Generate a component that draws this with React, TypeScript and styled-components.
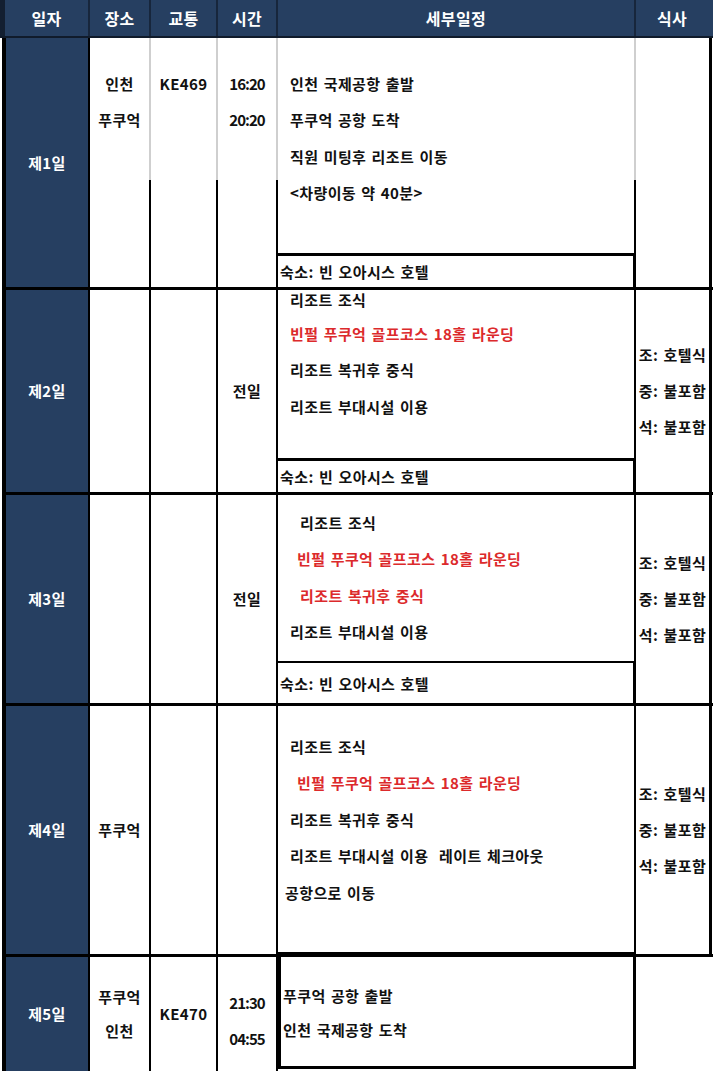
import React from "react";
import styled, { createGlobalStyle, css } from "styled-components";

const NAVY = "#263f61";
const RED = "#dc2a2c";

const GlobalStyle = createGlobalStyle`
  html, body {
    margin: 0;
    padding: 0;
    background: #fff;
  }
`;

const Sheet = styled.div`
  width: 713px;
  background: #fff;
  font-family: "Noto Sans CJK KR", "Noto Sans", sans-serif;
  font-weight: 700;
  font-size: 15px;
  letter-spacing: 0.4px;
  word-spacing: 1.5px;
  color: #111;
`;

const HeaderRow = styled.div`
  display: grid;
  grid-template-columns: 90px 61px 67px 60px 358px 72px;
  height: 38px;
  box-sizing: border-box;
  border-bottom: 2px solid #101b2b;
  background: ${NAVY};
`;

const HeadCell = styled.div<{ $first?: boolean; $last?: boolean }>`
  display: flex;
  align-items: center;
  justify-content: center;
  box-sizing: border-box;
  color: #fff;
  font-size: 16px;
  border-right: ${({ $last }) => ($last ? "none" : "2px solid #17263c")};
  border-left: ${({ $first }) => ($first ? "5px solid #131f31" : "none")};
`;

const DayRow = styled.div<{ $h: number; $open?: boolean }>`
  display: grid;
  grid-template-columns: 88px 61px 67px 60px 358px 76px;
  margin-left: 2px;
  height: ${({ $h }) => $h}px;
  box-sizing: border-box;
  border-bottom: ${({ $open }) => ($open ? "none" : "3px solid #000")};
`;

// the upper part of the first day's column lines is faint in the scan
const fadeTop = css`
  border-image: linear-gradient(to bottom, #cfcfcf 0 142px, #000 142px) 1;
`;

const Cell = styled.div<{
  $top?: number;
  $lh?: number;
  $center?: boolean;
  $fade?: boolean;
  $edge?: number;
  $tight?: boolean;
}>`
  display: flex;
  flex-direction: column;
  align-items: center;
  justify-content: ${({ $center }) => ($center ? "center" : "flex-start")};
  box-sizing: border-box;
  padding-top: ${({ $top }) => $top ?? 0}px;
  line-height: ${({ $lh }) => $lh ?? 36}px;
  border-right: ${({ $edge }) => $edge ?? 2}px solid #000;
  white-space: nowrap;
  letter-spacing: ${({ $tight }) => ($tight ? "-1px" : "inherit")};
  ${({ $fade }) => $fade && fadeTop}
`;

const DayCell = styled(Cell)`
  justify-content: center;
  background: ${NAVY};
  color: #fff;
  border-left: 4px solid #000;
`;

const Detail = styled.div<{ $fade?: boolean; $boxed?: boolean; $under?: number }>`
  display: flex;
  flex-direction: column;
  box-sizing: border-box;
  border-right: 2px solid #000;
  border-bottom: ${({ $under }) => ($under ? `${$under}px solid #000` : "none")};
  ${({ $fade }) => $fade && fadeTop}
  ${({ $boxed }) =>
    $boxed &&
    css`
      border: 3px solid #000;
      border-top: none;
      margin-bottom: 2px;
    `}
`;

const Plan = styled.div<{ $top: number; $lh?: number }>`
  flex: 1;
  padding-top: ${({ $top }) => $top}px;
  line-height: ${({ $lh }) => $lh ?? 36.4}px;
`;

const PlanLine = styled.div<{ $red?: boolean; $indent?: number; $squeezed?: boolean }>`
  padding-left: ${({ $indent }) => $indent ?? 12}px;
  color: ${({ $red }) => ($red ? RED : "#111")};
  white-space: nowrap;
  ${({ $squeezed }) =>
    $squeezed &&
    css`
      line-height: 20px;
      margin-bottom: 6px;
    `}
`;

const Lodging = styled.div<{ $h: number; $line?: number }>`
  display: flex;
  align-items: center;
  height: ${({ $h }) => $h}px;
  box-sizing: border-box;
  padding-left: 2px;
  border-top: ${({ $line }) => $line ?? 3}px solid #000;
  border-right: 1px solid #000;
`;

const Meals = () => (
  <Cell $center $edge={3}>
    <div>조: 호텔식</div>
    <div>중: 불포함</div>
    <div>석: 불포함</div>
  </Cell>
);

export default function App() {
  return (
    <>
      <GlobalStyle />
      <Sheet>
        <HeaderRow>
          <HeadCell $first>일자</HeadCell>
          <HeadCell>장소</HeadCell>
          <HeadCell>교통</HeadCell>
          <HeadCell>시간</HeadCell>
          <HeadCell>세부일정</HeadCell>
          <HeadCell $last>식사</HeadCell>
        </HeaderRow>

        <DayRow $h={252}>
          <DayCell>제1일</DayCell>
          <Cell $top={28} $fade>
            <div>인천</div>
            <div>푸쿠억</div>
          </Cell>
          <Cell $top={28} $fade>
            <div>KE469</div>
          </Cell>
          <Cell $top={28} $fade $tight>
            <div>16:20</div>
            <div>20:20</div>
          </Cell>
          <Detail $fade>
            <Plan $top={28}>
              <PlanLine>인천 국제공항 출발</PlanLine>
              <PlanLine>푸쿠억 공항 도착</PlanLine>
              <PlanLine>직원 미팅후 리조트 이동</PlanLine>
              <PlanLine>&lt;차량이동 약 40분&gt;</PlanLine>
            </Plan>
            <Lodging $h={34}>숙소: 빈 오아시스 호텔</Lodging>
          </Detail>
          <Cell $edge={3} />
        </DayRow>

        <DayRow $h={205}>
          <DayCell>제2일</DayCell>
          <Cell />
          <Cell />
          <Cell $center>
            <div>전일</div>
          </Cell>
          <Detail>
            <Plan $top={0}>
              <PlanLine $squeezed>리조트 조식</PlanLine>
              <PlanLine $red>빈펄 푸쿠억 골프코스 18홀 라운딩</PlanLine>
              <PlanLine>리조트 복귀후 중식</PlanLine>
              <PlanLine>리조트 부대시설 이용</PlanLine>
            </Plan>
            <Lodging $h={34}>숙소: 빈 오아시스 호텔</Lodging>
          </Detail>
          <Meals />
        </DayRow>

        <DayRow $h={211}>
          <DayCell>제3일</DayCell>
          <Cell />
          <Cell />
          <Cell $center>
            <div>전일</div>
          </Cell>
          <Detail>
            <Plan $top={10}>
              <PlanLine $indent={22}>리조트 조식</PlanLine>
              <PlanLine $red $indent={19}>
                빈펄 푸쿠억 골프코스 18홀 라운딩
              </PlanLine>
              <PlanLine $red $indent={22}>
                리조트 복귀후 중식
              </PlanLine>
              <PlanLine>리조트 부대시설 이용</PlanLine>
            </Plan>
            <Lodging $h={42} $line={2}>
              숙소: 빈 오아시스 호텔
            </Lodging>
          </Detail>
          <Meals />
        </DayRow>

        <DayRow $h={251}>
          <DayCell>제4일</DayCell>
          <Cell $center>
            <div>푸쿠억</div>
          </Cell>
          <Cell />
          <Cell />
          <Detail $under={2}>
            <Plan $top={23}>
              <PlanLine>리조트 조식</PlanLine>
              <PlanLine $red $indent={19}>
                빈펄 푸쿠억 골프코스 18홀 라운딩
              </PlanLine>
              <PlanLine>리조트 복귀후 중식</PlanLine>
              <PlanLine>리조트 부대시설 이용&nbsp; 레이트 체크아웃</PlanLine>
              <PlanLine $indent={7}>공항으로 이동</PlanLine>
            </Plan>
          </Detail>
          <Meals />
        </DayRow>

        <DayRow $h={114} $open>
          <DayCell>제5일</DayCell>
          <Cell $center $lh={34}>
            <div>푸쿠억</div>
            <div>인천</div>
          </Cell>
          <Cell $center>
            <div>KE470</div>
          </Cell>
          <Cell $center $top={14} $tight>
            <div>21:30</div>
            <div>04:55</div>
          </Cell>
          <Detail $boxed>
            <Plan $top={22} $lh={34}>
              <PlanLine $indent={2}>푸쿠억 공항 출발</PlanLine>
              <PlanLine $indent={2}>인천 국제공항 도착</PlanLine>
            </Plan>
          </Detail>
          <Cell $edge={0} />
        </DayRow>
      </Sheet>
    </>
  );
}
